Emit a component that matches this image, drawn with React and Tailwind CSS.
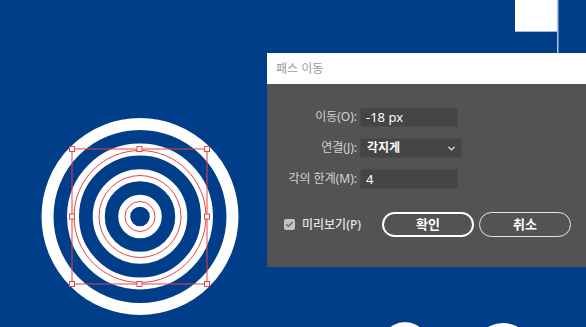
import { ChevronDown, Check } from "lucide-react";

const RED = "#e5434a";

const Artwork = () => {
    const cx = 140;
    const cy = 216.5;
    const handles = [
        [72, 149], [139.5, 149], [207, 149],
        [72, 216.5], [207, 216.5],
        [72, 284], [139.5, 284], [207, 284],
    ];

    return (
        <svg className="absolute inset-0" width="586" height="327" viewBox="0 0 586 327">
            {/* target rings */}
            {[92.5, 67, 41.25, 15.75].map((r) => (
                <circle key={r} cx={cx} cy={cy} r={r} fill="none" stroke="#ffffff" strokeWidth="12" />
            ))}

            {/* selected paths */}
            {[66, 41, 15].map((r) => (
                <circle key={`p-${r}`} cx={cx} cy={cy} r={r} fill="none" stroke={RED} strokeWidth="1" />
            ))}
            <rect x="72" y="149" width="135" height="135" fill="none" stroke={RED} strokeWidth="1" />
            {handles.map(([x, y], i) => (
                <rect key={i} x={x - 2.5} y={y - 2.5} width="5" height="5" fill="#ffffff" stroke={RED} strokeWidth="1" />
            ))}

            {/* top-right shape */}
            <rect x="515" y="0" width="42" height="32" fill="#ffffff" />
            <rect x="515" y="31" width="42" height="1" fill="#9db8e0" />
            <rect x="557" y="0" width="1.5" height="54" fill="#a9c2e6" />

            {/* shapes peeking at the bottom */}
            <ellipse cx="405" cy="362" rx="30" ry="40" fill="#ffffff" />
            <ellipse cx="503" cy="363" rx="34" ry="40" fill="#ffffff" />
        </svg>
    );
};

const Field = ({ label, children }) => (
    <div className="flex items-center gap-[3px] h-[20px]">
        <span className="w-[72px] text-right text-[12px] leading-none text-[#d2d2d2] whitespace-nowrap">{label}</span>
        {children}
    </div>
);

const OffsetPathDialog = () => (
    <div
        className="absolute left-[267px] top-[53px] w-[330px] h-[214px] bg-[#535353] flex flex-col"
        style={{ fontFamily: "'Noto Sans', 'Noto Sans CJK KR', sans-serif" }}
    >
        {/* Title bar */}
        <div className="h-[31px] bg-white flex items-center pl-[9px]">
            <span className="text-[12px] leading-none text-[#9a9a9a]">패스 이동</span>
        </div>

        {/* Form */}
        <div className="flex flex-col gap-[11px] pl-[18px] pt-[23px]">
            <Field label="이동(O):">
                <div className="w-[98px] h-[19px] bg-[#454545] border border-[#4b4b4b] rounded-[2px] flex items-center px-[5px]">
                    <span className="text-[13px] leading-none text-white">-18 px</span>
                </div>
            </Field>
            <Field label="연결(J):">
                <div className="w-[102px] h-[20px] bg-[#454545] border border-[#4b4b4b] rounded-[2px] flex items-center justify-between pl-[6px] pr-[4px]">
                    <span className="text-[12px] leading-none text-white font-bold">각지게</span>
                    <ChevronDown size={11} strokeWidth={3} color="#e8e8e8" />
                </div>
            </Field>
            <Field label="각의 한계(M):">
                <div className="w-[98px] h-[20px] bg-[#454545] border border-[#4b4b4b] rounded-[2px] flex items-center px-[5px]">
                    <span className="text-[13px] leading-none text-white">4</span>
                </div>
            </Field>
        </div>

        {/* Bottom row */}
        <div className="flex items-center pl-[17px] pt-[23px]">
            <div className="w-[11px] h-[11px] rounded-[2px] bg-[#c4c4c4] flex items-center justify-center">
                <Check size={9} strokeWidth={4} color="#6e6e6e" />
            </div>
            <span className="ml-[7px] text-[12px] leading-none text-[#e4e4e4] font-medium">미리보기(P)</span>
            <button className="ml-[21px] w-[92px] h-[25px] rounded-full border-2 border-white text-[13px] leading-none text-white font-bold flex items-center justify-center">
                확인
            </button>
            <button className="ml-[5px] w-[92px] h-[25px] rounded-full border-[1.5px] border-[#e6e6e6] text-[13px] leading-none text-white font-bold flex items-center justify-center">
                취소
            </button>
        </div>
    </div>
);

const App = () => {
    return (
        <div className="relative w-[586px] h-[327px] overflow-hidden bg-[#013e8a]">
            <Artwork />
            <OffsetPathDialog />
        </div>
    );
};

export default App;
